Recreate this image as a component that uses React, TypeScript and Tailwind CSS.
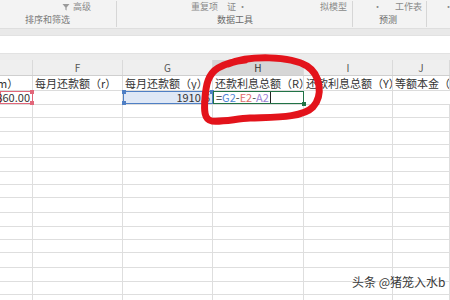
import React from 'react'

const cjk = { fontFamily: '"Noto Sans CJK SC", "Noto Sans", sans-serif' }

// row heights below row 2, read off the reference grid
const rowHeights = [
  'h-[13px]', 'h-[14px]', 'h-[13px]', 'h-[13px]', 'h-[14px]', 'h-[13px]', 'h-[13px]',
  'h-[15px]', 'h-[14px]', 'h-[13px]', 'h-[13px]', 'h-[15px]', 'h-[14px]', 'h-[13px]', 'h-[13px]',
]

const cols = ['w-[33px]', 'w-[90px]', 'w-[90px]', 'w-[91px]', 'w-[89px]', 'w-[57px]']

function Ribbon() {
  return (
    <div className="flex h-[29px] bg-[#f3f3f3] text-[9px] leading-none text-[#8a8a8a] whitespace-nowrap border-b border-[#dedede]">
      <div className="w-[117px] shrink-0 flex flex-col border-r border-[#d6d6d6] my-[1px]">
        <div className="flex items-center h-[12px] pl-[62px] gap-[3px]">
          <svg width="8" height="8" viewBox="0 0 8 8">
            <path d="M0.5 1h7L4.6 4.5V7.5L3.4 6.8V4.5z" fill="#9a9a9a" />
          </svg>
          <span>高级</span>
        </div>
        <div className="h-[15px] flex items-center pl-[25px] text-[#7a7a7a]">排序和筛选</div>
      </div>
      <div className="w-[236px] shrink-0 flex flex-col border-r border-[#d6d6d6] my-[1px]">
        <div className="flex items-center h-[12px] pl-[74px]">
          <span>重复项</span>
          <span className="ml-[9px]">证 ·</span>
          <span className="ml-[73px]">拟模型</span>
        </div>
        <div className="h-[15px] flex items-center pl-[100px] text-[#6a6a6a]">数据工具</div>
      </div>
      <div className="w-[74px] shrink-0 flex flex-col border-r border-[#d6d6d6] my-[1px]">
        <div className="flex items-center h-[12px] pl-[20px]">
          <span>·</span>
          <span className="ml-[13px]">工作表</span>
        </div>
        <div className="h-[15px] flex items-center pl-[26px] text-[#6a6a6a]">预测</div>
      </div>
      <div className="flex-1 flex flex-col">
        <div className="flex items-center h-[12px] pl-[17px]">·</div>
      </div>
    </div>
  )
}

function Corner({ color, className }: { color: string; className: string }) {
  return <div className={`absolute w-[4px] h-[4px] ${color} ${className}`} />
}

export default function App() {
  const headers = ['', 'F', 'G', 'H', 'I', 'J']
  const row1 = ['', '每月还款额（r）', '每月还款额（y）', '还款利息总额（R）', '还款利息总额（Y）', '等额本金（']

  return (
    <div className="relative w-[450px] h-[300px] overflow-hidden bg-white" style={cjk}>
      <Ribbon />
      <div className="h-[6px] bg-[#e9e9e9]" />
      <div className="h-[19px] bg-white border-y border-[#e2e2e2]" />
      <div className="h-[6px] bg-[#ececec]" />

      {/* column letters */}
      <div className="flex h-[16px] bg-[#efefef] border-b border-[#cfcfcf] text-[10px] text-[#555]">
        {headers.map((h, i) => (
          <div
            key={i}
            className={`${cols[i]} shrink-0 flex items-center justify-center border-r border-[#dadada] ${
              h === 'H' ? 'bg-[#d6d6d6] text-[#333]' : ''
            }`}
          >
            {h}
          </div>
        ))}
      </div>

      {/* row 1 */}
      <div className="flex h-[15px] text-[11px] text-[#333] border-b border-[#dcdcdc]">
        <div className={`${cols[0]} shrink-0 overflow-hidden border-r border-[#dcdcdc] flex items-center`}>
          <span className="-ml-[3px] whitespace-nowrap">m）</span>
        </div>
        {row1.slice(1).map((t, i) => (
          <div
            key={i}
            className={`${cols[i + 1]} shrink-0 border-r border-[#dcdcdc] flex items-center pl-[2px] whitespace-nowrap overflow-hidden`}
          >
            {t}
          </div>
        ))}
      </div>

      {/* row 2 */}
      <div className="flex h-[14px] text-[11px] text-[#333] border-b border-[#dcdcdc]">
        <div className={`${cols[0]} shrink-0 relative border border-[#e2677a] flex items-center justify-end pr-[2px]`}>
          <span className="shrink-0 whitespace-nowrap">1860.00</span>
          <Corner color="bg-[#e2677a]" className="-right-[2px] -top-[2px]" />
          <Corner color="bg-[#e2677a]" className="-right-[2px] -bottom-[2px]" />
        </div>
        <div className={`${cols[1]} shrink-0 border-r border-[#dcdcdc]`} />
        <div className={`${cols[2]} shrink-0 relative bg-[#dfe8f6] border border-[#4f7fc4] flex items-center justify-end pr-[2px]`}>
          <span>1910.6</span>
          <Corner color="bg-[#4f7fc4]" className="-left-[2px] -top-[2px]" />
          <Corner color="bg-[#4f7fc4]" className="-left-[2px] -bottom-[2px]" />
          <Corner color="bg-[#4f7fc4]" className="-right-[2px] -top-[2px]" />
        </div>
        <div className={`${cols[3]} shrink-0 relative border-[1.5px] border-[#217346] flex items-center pl-[2px] whitespace-nowrap`}>
          <span className="text-[#333]">=</span>
          <span className="text-[#4f86d6]">G2</span>
          <span className="text-[#333]">-</span>
          <span className="text-[#e06d6d]">E2</span>
          <span className="text-[#333]">-</span>
          <span className="text-[#9d82d4]">A2</span>
          <span className="ml-[1px] w-[1px] h-[11px] bg-[#222]" />
          <Corner color="bg-[#217346]" className="-right-[3px] -bottom-[3px]" />
        </div>
        <div className={`${cols[4]} shrink-0 border-r border-[#dcdcdc]`} />
        <div className={`${cols[5]} shrink-0`} />
      </div>

      {/* empty rows */}
      {rowHeights.map((h, r) => (
        <div key={r} className={`flex ${h} border-b border-[#dedede]`}>
          {cols.map((c, i) => (
            <div key={i} className={`${c} shrink-0 border-r border-[#dedede]`} />
          ))}
        </div>
      ))}

      {/* hand-drawn red loop */}
      <svg className="absolute inset-0 pointer-events-none" width="450" height="300" viewBox="0 0 450 300">
        <path
          d="M228 64 C250 55, 290 56, 307 66 C321 75, 323 96, 313 107 C302 118, 275 117, 250 118 C235 119, 222 122, 212 121 C204 120, 204 110, 205 98 C206 85, 208 74, 218 68 C225 64, 235 61, 245 60"
          fill="none"
          stroke="#e3131b"
          strokeWidth="7"
          strokeLinecap="round"
          strokeLinejoin="round"
        />
      </svg>

      {/* watermark */}
      <div className="absolute left-[352px] top-[273px] text-[12px] text-[#3a3a3a] whitespace-nowrap [text-shadow:0_0_2px_#fff]">
        头条 @猪笼入水b
      </div>
    </div>
  )
}
